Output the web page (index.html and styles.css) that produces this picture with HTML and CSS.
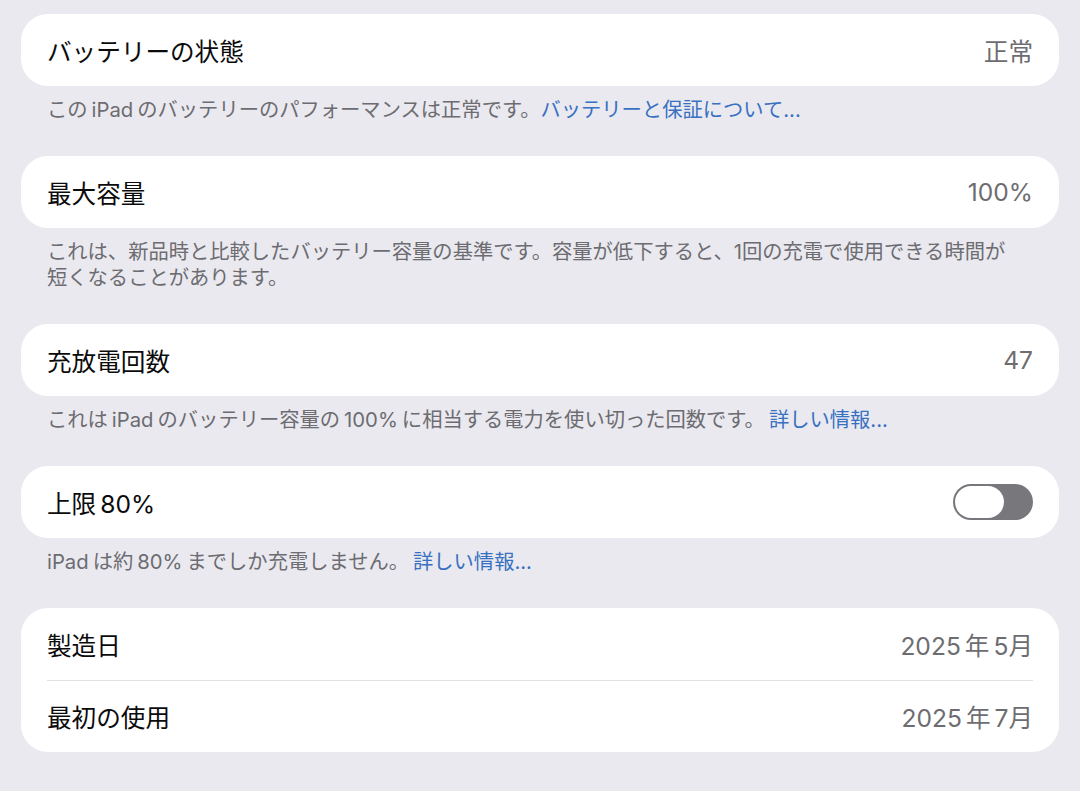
FILE: index.html
```html
<!DOCTYPE html>
<html lang="ja">
<head>
<meta charset="utf-8">
<title>バッテリー</title>
<link rel="stylesheet" href="styles.css">
</head>
<body>
<main class="page">
  <section class="group">
    <div class="card">
      <div class="row"><span class="label">バッテリーの状態</span><span class="value">正常</span></div>
    </div>
    <p class="footer">この<span class="lat">iPad</span>のバッテリーのパフォーマンスは正常です。<a class="link">バッテリーと保証について...</a></p>
  </section>
  <section class="group">
    <div class="card">
      <div class="row"><span class="label">最大容量</span><span class="value">100%</span></div>
    </div>
    <p class="footer">これは、新品時と比較したバッテリー容量の基準です。容量が低下すると、1回の充電で使用できる時間が<br>短くなることがあります。</p>
  </section>
  <section class="group">
    <div class="card">
      <div class="row"><span class="label">充放電回数</span><span class="value">47</span></div>
    </div>
    <p class="footer">これは<span class="lat">iPad</span>のバッテリー容量の<span class="lat">100%</span>に相当する電力を使い切った回数です。<a class="link gap">詳しい情報...</a></p>
  </section>
  <section class="group">
    <div class="card">
      <div class="row"><span class="label">上限<span class="lat">80%</span></span><span class="toggle"><span class="knob"></span></span></div>
    </div>
    <p class="footer"><span class="lat first">iPad</span>は約<span class="lat">80%</span>までしか充電しません。<a class="link gap">詳しい情報...</a></p>
  </section>
  <section class="group">
    <div class="card">
      <div class="row"><span class="label">製造日</span><span class="value">2025<span class="lat">年</span>5月</span></div>
      <div class="row divided"><span class="label">最初の使用</span><span class="value">2025<span class="lat">年</span>7月</span></div>
    </div>
  </section>
</main>
</body>
</html>
```
FILE: styles.css
```css
html, body {
  margin: 0;
  padding: 0;
}
body {
  background: #eae9ef;
  font-family: "Inter", "Noto Sans CJK JP", sans-serif;
  width: 1080px;
  height: 791px;
  overflow: hidden;
}
.page {
  padding: 14px 21px 0 21px;
  display: flex;
  flex-direction: column;
}
.card {
  background: #ffffff;
  border-radius: 27px;
  display: flex;
  flex-direction: column;
}
.row {
  height: 71.5px;
  margin: 0 26px;
  display: flex;
  align-items: center;
  justify-content: space-between;
}
.row.divided {
  border-top: 1px solid #e1e1e4;
  height: 71px;
}
.label {
  font-size: 24.6px;
  color: #0b0b0c;
  font-weight: 400;
}
.value {
  font-size: 24.6px;
  color: #6d6d71;
}
.lat {
  margin: 0 4px;
}
.lat.first {
  margin-left: 0;
}
.footer {
  margin: 0;
  padding: 11px 26px 33.5px 26px;
  font-size: 20.3px;
  line-height: 26px;
  color: #6c6c71;
}
.link {
  color: #3870c2;
}
.link.gap {
  margin-left: 4px;
}
.toggle {
  width: 80px;
  height: 36px;
  border-radius: 18px;
  background: #78777c;
  display: flex;
  align-items: center;
  padding: 0 2px;
  box-sizing: border-box;
}
.knob {
  width: 49px;
  height: 32px;
  border-radius: 16px;
  background: #ffffff;
}
```
